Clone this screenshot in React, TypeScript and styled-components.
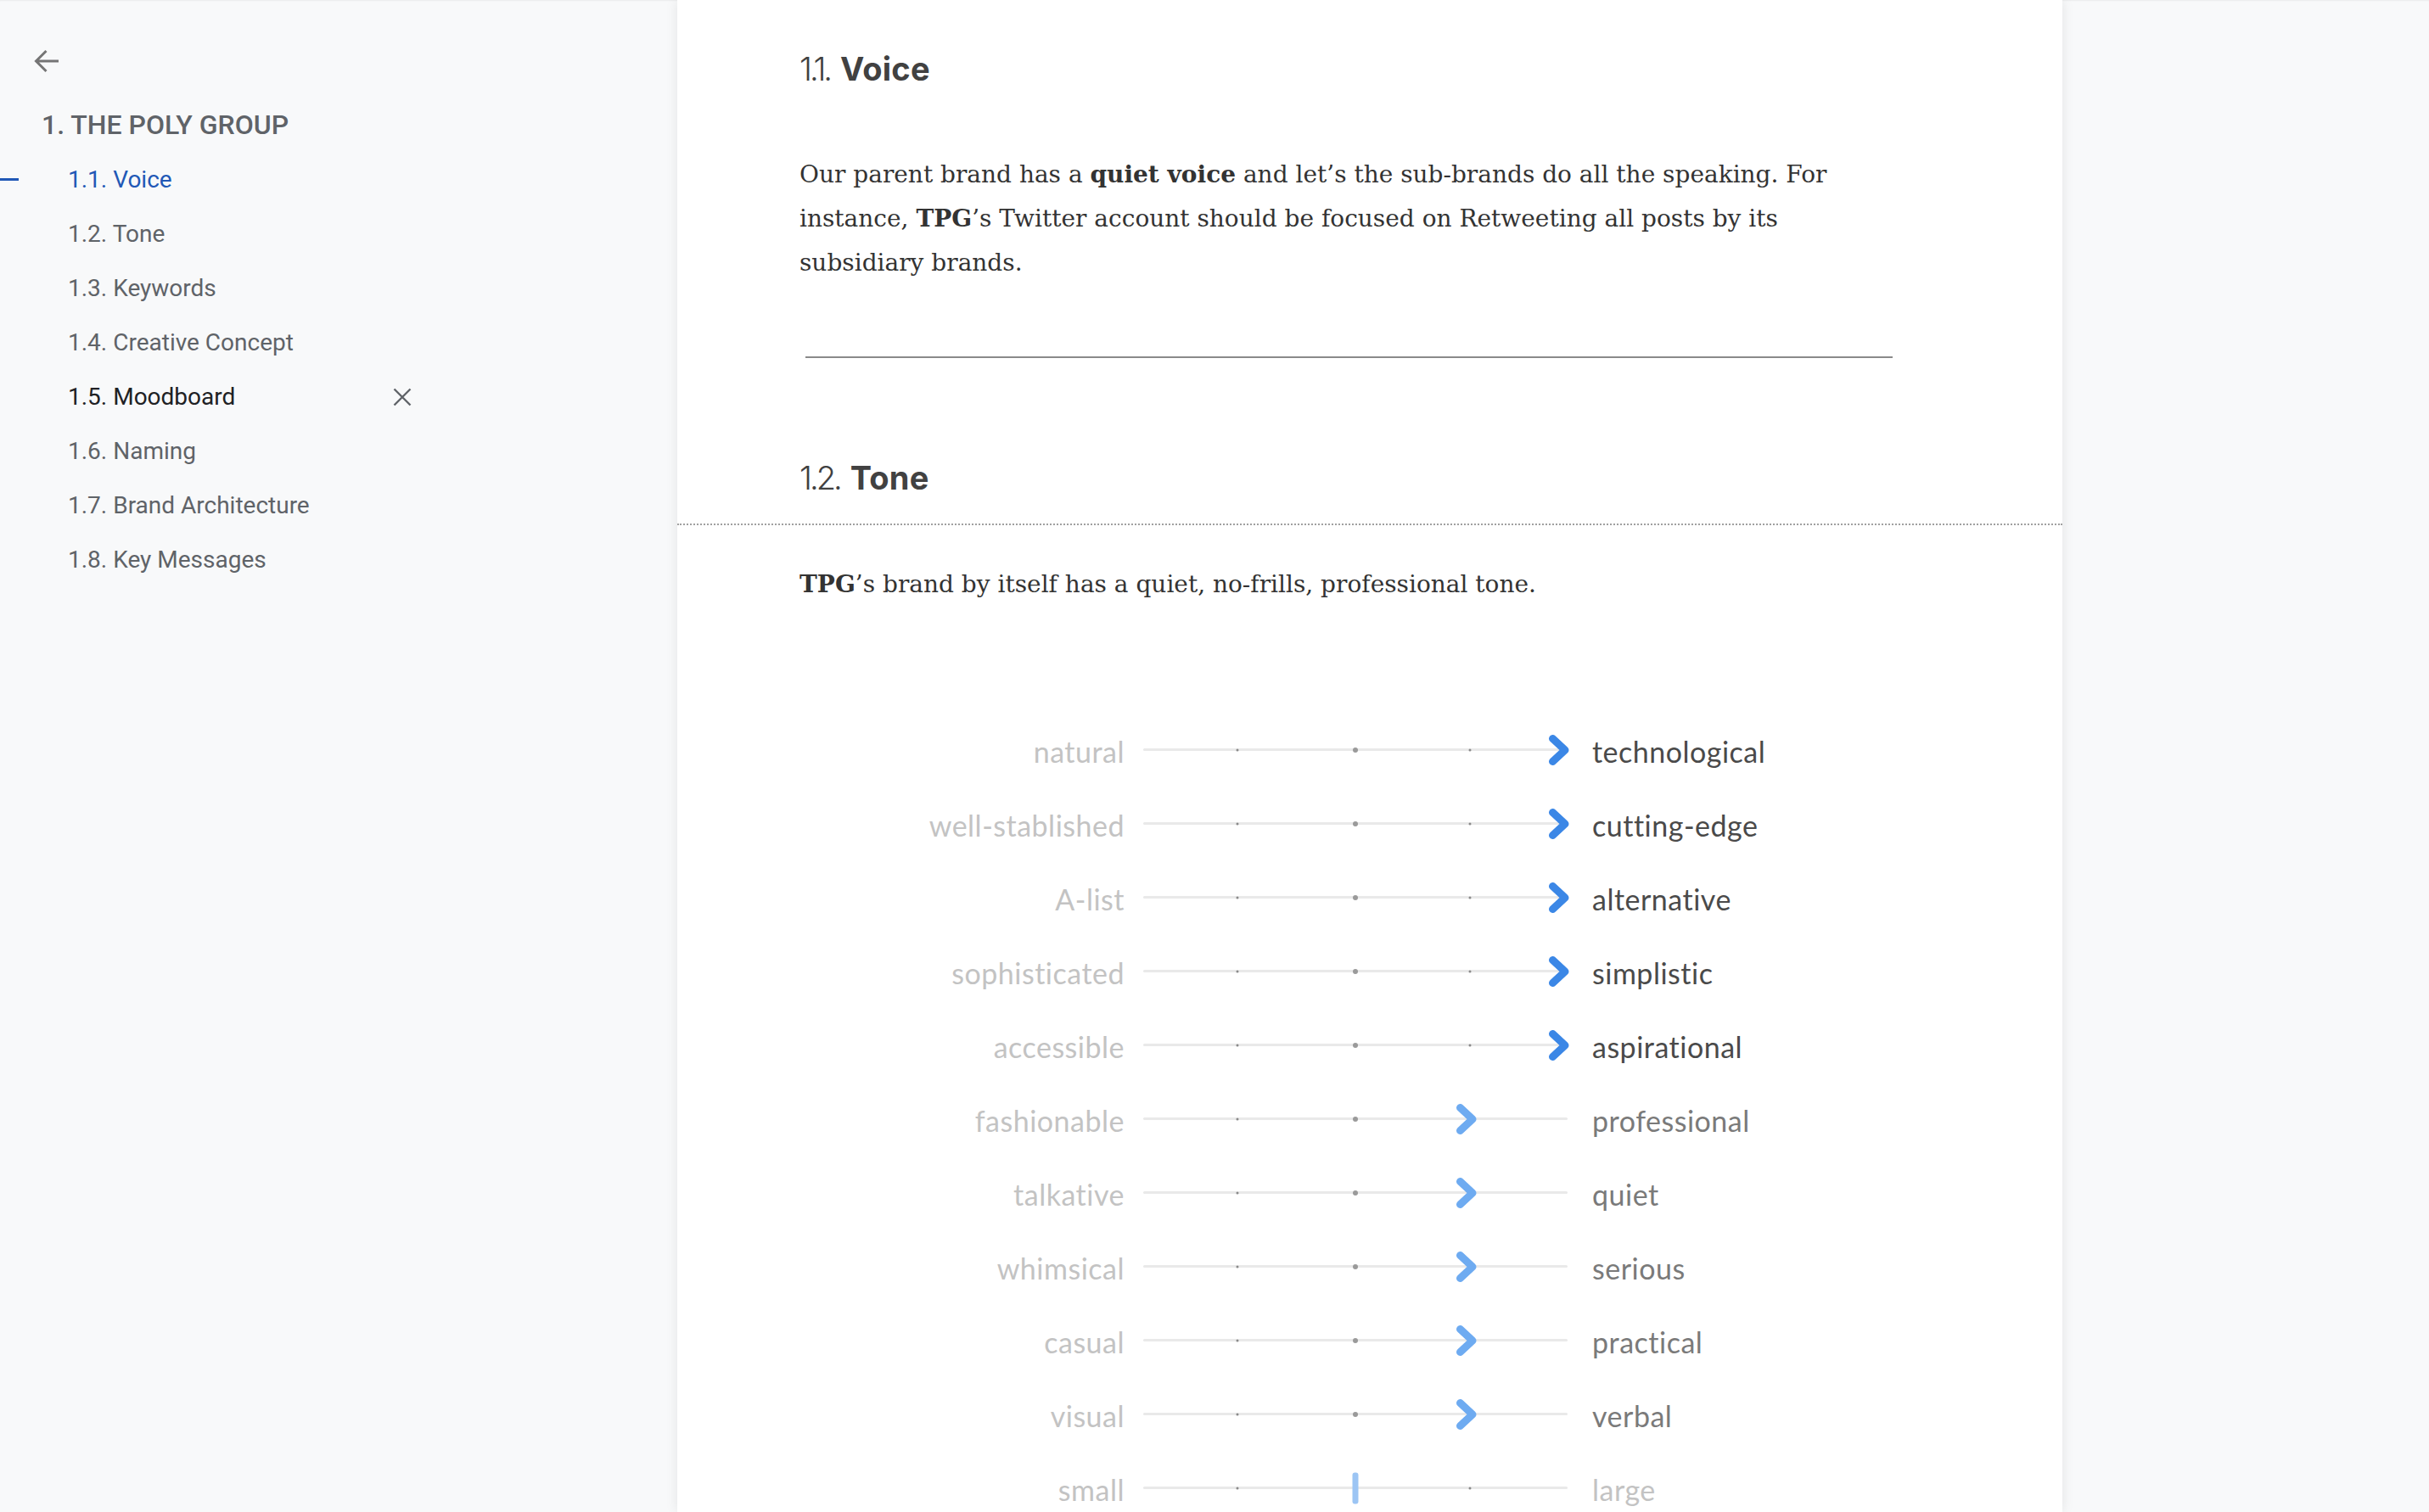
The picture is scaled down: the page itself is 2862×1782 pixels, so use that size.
import React from "react";
import styled, { createGlobalStyle } from "styled-components";

const GlobalStyle = createGlobalStyle`
  html, body { margin: 0; padding: 0; height: 100%; }
  body { background: #f8f9fa; overflow: hidden; }
  #root { height: 100%; }
`;

const Page = styled.div`
  display: flex;
  height: 1782px;
  width: 2862px;
  background: #f8f9fa;
  box-shadow: inset 0 2px 2px -1px rgba(0, 0, 0, 0.06);
`;

const Sidebar = styled.nav`
  width: 798px;
  flex: none;
  padding-top: 55px;
  box-sizing: border-box;
  font-family: Roboto, "Liberation Sans", sans-serif;
`;

const BackButton = styled.button`
  display: block;
  margin-left: 38px;
  width: 34px;
  height: 34px;
  padding: 0;
  border: none;
  background: none;
  color: #757575;
  cursor: pointer;
`;

const GroupTitle = styled.div`
  margin-top: 38px;
  margin-left: 49px;
  font-size: 32px;
  line-height: 40px;
  font-weight: 500;
  color: #5f6368;
`;

const NavList = styled.ul`
  list-style: none;
  margin: 13px 0 0;
  padding: 0;
`;

const NavItem = styled.li<{ $state?: "active" | "open" }>`
  position: relative;
  display: flex;
  align-items: center;
  width: 500px;
  box-sizing: border-box;
  padding: 0 15px 0 80px;
  font-size: 28px;
  line-height: 64px;
  color: ${(p) =>
    p.$state === "active" ? "#2158b6" : p.$state === "open" ? "#202124" : "#5f6368"};

  &::before {
    content: "";
    display: ${(p) => (p.$state === "active" ? "block" : "none")};
    position: absolute;
    left: 0;
    top: 50%;
    width: 22px;
    height: 3px;
    margin-top: -2px;
    background: #2158b6;
  }
`;

const NavLabel = styled.span`
  flex: 1;
`;

const CloseIcon = styled.svg`
  width: 22px;
  height: 22px;
  color: #5f6368;
`;

const Panel = styled.main`
  width: 1632px;
  flex: none;
  background: #ffffff;
  box-shadow: 0 0 14px rgba(0, 0, 0, 0.09);
  overflow: hidden;
`;

const Section = styled.section`
  padding: 0 144px;
`;

const Heading = styled.h2<{ $top: number }>`
  margin: ${(p) => p.$top}px 0 0;
  font-family: Inter, "Open Sans", sans-serif;
  font-size: 38px;
  line-height: 52px;
  color: #414141;
  font-weight: 700;
  letter-spacing: 0.2px;
`;

const HeadingNum = styled.span`
  font-weight: 300;
  letter-spacing: -3px;
  margin-right: 12px;
`;

const Paragraph = styled.p<{ $top: number }>`
  margin: ${(p) => p.$top}px 0 0;
  width: 1280px;
  font-family: "DejaVu Serif", "Liberation Serif", serif;
  font-size: 28px;
  line-height: 52px;
  color: #333333;

  strong {
    font-weight: 700;
  }
`;

const Rule = styled.hr`
  margin: 84px 0 0 7px;
  width: 1281px;
  height: 2px;
  border: none;
  background: #8a8a8a;
`;

const PageBreak = styled.div`
  margin-top: 28px;
  border-top: 2px dotted #a0a0a0;
`;

const Scales = styled.div`
  margin-top: 125px;
  display: flex;
  flex-direction: column;
`;

const ScaleRow = styled.div`
  display: grid;
  grid-template-columns: 405px 500px 1fr;
  align-items: center;
  height: 87px;
  font-family: Lato, "Open Sans", sans-serif;
  font-size: 34px;
  letter-spacing: 0.5px;
`;

const LeftLabel = styled.span`
  text-align: right;
  padding: 3px 22px 0 0;
  color: #c3c3c3;
`;

const RightLabel = styled.span<{ $tone: "strong" | "medium" | "faint" }>`
  padding: 3px 0 0 29px;
  color: ${(p) => (p.$tone === "strong" ? "#4a4a4a" : p.$tone === "medium" ? "#7a7a7a" : "#c3c3c3")};
`;

const Track = styled.div`
  position: relative;
  height: 3px;
  background: #e9e9e9;
  border-radius: 2px;
`;

const Tick = styled.span<{ $big?: boolean }>`
  position: absolute;
  top: 50%;
  width: ${(p) => (p.$big ? 6 : 3)}px;
  height: ${(p) => (p.$big ? 6 : 3)}px;
  border-radius: 50%;
  background: ${(p) => (p.$big ? "#9a9a9a" : "#8a8a8a")};
  transform: translate(-50%, -50%);
`;

const Thumb = styled.span`
  position: absolute;
  top: 50%;
  display: flex;
  transform: translate(-50%, -50%);
`;

const Bar = styled.span`
  display: block;
  width: 7px;
  height: 37px;
  border-radius: 3px;
  background: #9cc5f4;
`;

type Level = "max" | "high" | "mid";

const positions: Record<Level, number> = { max: 490, high: 381, mid: 250 };

const scales: { left: string; right: string; level: Level }[] = [
  { left: "natural", right: "technological", level: "max" },
  { left: "well-stablished", right: "cutting-edge", level: "max" },
  { left: "A-list", right: "alternative", level: "max" },
  { left: "sophisticated", right: "simplistic", level: "max" },
  { left: "accessible", right: "aspirational", level: "max" },
  { left: "fashionable", right: "professional", level: "high" },
  { left: "talkative", right: "quiet", level: "high" },
  { left: "whimsical", right: "serious", level: "high" },
  { left: "casual", right: "practical", level: "high" },
  { left: "visual", right: "verbal", level: "high" },
  { left: "small", right: "large", level: "mid" },
];

const Chevron = ({ color }: { color: string }) => (
  <svg width="27" height="38" viewBox="0 0 27 38" fill="none">
    <path
      d="M6 5.5 L20.5 19 L6 32.5"
      stroke={color}
      strokeWidth="9"
      strokeLinecap="round"
      strokeLinejoin="round"
    />
  </svg>
);

const navItems = [
  "1.1. Voice",
  "1.2. Tone",
  "1.3. Keywords",
  "1.4. Creative Concept",
  "1.5. Moodboard",
  "1.6. Naming",
  "1.7. Brand Architecture",
  "1.8. Key Messages",
];

export default function App() {
  return (
    <>
      <GlobalStyle />
      <Page>
        <Sidebar>
          <BackButton aria-label="Back">
            <svg width="34" height="34" viewBox="0 0 34 34" fill="none">
              <path
                d="M31 17 H4.5 M16.5 5 L4.5 17 L16.5 29"
                stroke="currentColor"
                strokeWidth="3"
                strokeLinecap="butt"
              />
            </svg>
          </BackButton>
          <GroupTitle>1. THE POLY GROUP</GroupTitle>
          <NavList>
            {navItems.map((item, i) => (
              <NavItem key={item} $state={i === 0 ? "active" : i === 4 ? "open" : undefined}>
                <NavLabel>{item}</NavLabel>
                {i === 4 && (
                  <CloseIcon viewBox="0 0 22 22" fill="none">
                    <path d="M1.5 1.5 L20.5 20.5 M20.5 1.5 L1.5 20.5" stroke="currentColor" strokeWidth="2.4" />
                  </CloseIcon>
                )}
              </NavItem>
            ))}
          </NavList>
        </Sidebar>

        <Panel>
          <Section>
            <Heading $top={55}>
              <HeadingNum>1.1.</HeadingNum>Voice
            </Heading>
            <Paragraph $top={73}>
              Our parent brand has a <strong>quiet voice</strong> and let’s the sub-brands do all the speaking. For
              instance, <strong>TPG</strong>’s Twitter account should be focused on Retweeting all posts by its
              subsidiary brands.
            </Paragraph>
            <Rule />
            <Heading $top={115}>
              <HeadingNum>1.2.</HeadingNum>Tone
            </Heading>
          </Section>
          <PageBreak />
          <Section>
            <Paragraph $top={44}>
              <strong>TPG</strong>’s brand by itself has a quiet, no-frills, professional tone.
            </Paragraph>
            <Scales>
              {scales.map((s) => (
                <ScaleRow key={s.left}>
                  <LeftLabel>{s.left}</LeftLabel>
                  <Track>
                    <Tick style={{ left: 111 }} />
                    <Tick $big style={{ left: 250 }} />
                    <Tick style={{ left: 385 }} />
                    <Thumb style={{ left: positions[s.level] }}>
                      {s.level === "mid" ? (
                        <Bar />
                      ) : (
                        <Chevron color={s.level === "max" ? "#3b87e6" : "#6eabf1"} />
                      )}
                    </Thumb>
                  </Track>
                  <RightLabel $tone={s.level === "max" ? "strong" : s.level === "high" ? "medium" : "faint"}>
                    {s.right}
                  </RightLabel>
                </ScaleRow>
              ))}
            </Scales>
          </Section>
        </Panel>
      </Page>
    </>
  );
}
